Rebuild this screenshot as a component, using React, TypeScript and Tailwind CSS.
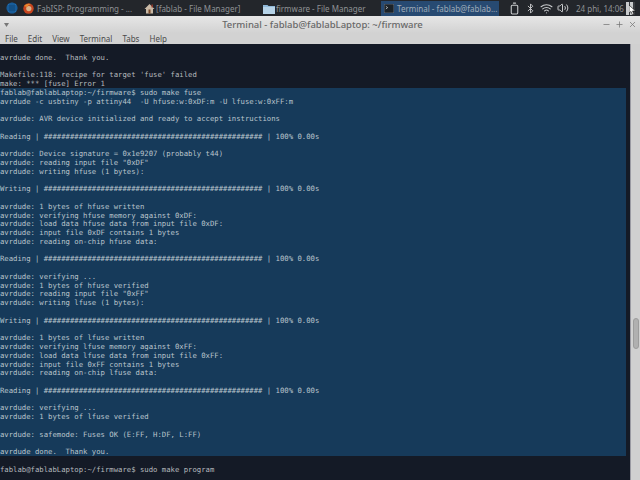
import { Battery, Bluetooth, Minus, Plus, Volume2, Wifi, X } from 'lucide-react';

const aboveSelection = [
  '',
  'avrdude done.  Thank you.',
  '',
  "Makefile:118: recipe for target 'fuse' failed",
  'make: *** [fuse] Error 1',
];

const bar = '#'.repeat(50);

const selection = [
  'fablab@fablabLaptop:~/firmware$ sudo make fuse',
  'avrdude -c usbtiny -p attiny44  -U hfuse:w:0xDF:m -U lfuse:w:0xFF:m',
  '',
  'avrdude: AVR device initialized and ready to accept instructions',
  '',
  `Reading | ${bar} | 100% 0.00s`,
  '',
  'avrdude: Device signature = 0x1e9207 (probably t44)',
  'avrdude: reading input file "0xDF"',
  'avrdude: writing hfuse (1 bytes):',
  '',
  `Writing | ${bar} | 100% 0.00s`,
  '',
  'avrdude: 1 bytes of hfuse written',
  'avrdude: verifying hfuse memory against 0xDF:',
  'avrdude: load data hfuse data from input file 0xDF:',
  'avrdude: input file 0xDF contains 1 bytes',
  'avrdude: reading on-chip hfuse data:',
  '',
  `Reading | ${bar} | 100% 0.00s`,
  '',
  'avrdude: verifying ...',
  'avrdude: 1 bytes of hfuse verified',
  'avrdude: reading input file "0xFF"',
  'avrdude: writing lfuse (1 bytes):',
  '',
  `Writing | ${bar} | 100% 0.00s`,
  '',
  'avrdude: 1 bytes of lfuse written',
  'avrdude: verifying lfuse memory against 0xFF:',
  'avrdude: load data lfuse data from input file 0xFF:',
  'avrdude: input file 0xFF contains 1 bytes',
  'avrdude: reading on-chip lfuse data:',
  '',
  `Reading | ${bar} | 100% 0.00s`,
  '',
  'avrdude: verifying ...',
  'avrdude: 1 bytes of lfuse verified',
  '',
  'avrdude: safemode: Fuses OK (E:FF, H:DF, L:FF)',
  '',
  'avrdude done.  Thank you.',
];

function Lines({ lines }: { lines: string[] }) {
  return (
    <>
      {lines.map((line, i) => (
        <div key={i} className="h-[8.77px] whitespace-pre">
          {line}
        </div>
      ))}
    </>
  );
}

function StartIcon() {
  return (
    <svg width="12" height="12" viewBox="0 0 12 12">
      <circle cx="6" cy="6" r="5.5" fill="#1f6fb5" />
      <path d="M1 4h10M0.5 6h11M1 8h10M4 1v10M6 0.5v11M8 1v10" stroke="#0d3a66" strokeWidth="0.7" />
    </svg>
  );
}

function FirefoxIcon() {
  return (
    <svg width="11" height="11" viewBox="0 0 11 11" className="shrink-0">
      <circle cx="5.5" cy="5.5" r="5.2" fill="#c8451f" />
      <circle cx="5.8" cy="5.6" r="2.6" fill="#d9b48a" />
      <path d="M1 3 Q4 0 8 1 Q5 2 4 4Z" fill="#e88a2c" />
    </svg>
  );
}

function HomeIcon() {
  return (
    <svg width="11" height="11" viewBox="0 0 11 11" className="shrink-0">
      <path d="M5.5 1 L10.5 6 H9 V10.5 H2 V6 H0.5Z" fill="#c9b9a6" />
      <rect x="4.5" y="6.5" width="2" height="4" fill="#7a4a2a" />
      <rect x="7.5" y="1.5" width="1.3" height="3" fill="#a33c2a" />
    </svg>
  );
}

function FolderIcon() {
  return (
    <svg width="12" height="10" viewBox="0 0 12 10" className="shrink-0">
      <path d="M0 1h4.5l1 1H12v8H0z" fill="#8fb8d8" />
      <rect y="3" width="12" height="7" fill="#b6d3e8" />
    </svg>
  );
}

function TerminalIcon() {
  return (
    <svg width="10" height="9" viewBox="0 0 11 10" className="shrink-0">
      <rect width="11" height="10" fill="#1b2228" stroke="#8b9298" strokeWidth="0.6" />
      <path d="M2 2.5 L4 4 L2 5.5" stroke="#d8dde0" strokeWidth="0.8" fill="none" />
    </svg>
  );
}

export default function App() {
  return (
    <div className="flex h-[480px] w-[640px] flex-col overflow-hidden font-['Noto_Sans',sans-serif]">
      {/* panel */}
      <div className="flex h-[16px] shrink-0 items-center bg-[#23262b] text-[8px] text-[#8f9295]">
        <div className="flex w-[23px] shrink-0 justify-center pl-[1px]">
          <StartIcon />
        </div>
        <div className="flex w-[120px] shrink-0 items-center gap-[3px] pt-[1px]">
          <FirefoxIcon />
          <span className="whitespace-nowrap">FabISP: Programming - ...</span>
        </div>
        <div className="flex w-[120px] shrink-0 items-center gap-[1px] pl-[1px] pt-[1px]">
          <HomeIcon />
          <span className="whitespace-nowrap">[fablab - File Manager]</span>
        </div>
        <div className="flex w-[118px] shrink-0 items-center pt-[1px]">
          <FolderIcon />
          <span className="ml-[1px] whitespace-nowrap">firmware - File Manager</span>
        </div>
        <div className="flex h-[15px] w-[118px] shrink-0 items-center gap-[3px] bg-[#274a72] pl-[3px] pt-[1px] text-[#a0acb8]">
          <TerminalIcon />
          <span className="whitespace-nowrap">Terminal - fablab@fablab...</span>
        </div>
        <div className="ml-[9px] flex w-[68px] shrink-0 items-center text-[#c9cbcd]">
          <Battery size={13} strokeWidth={2} className="shrink-0 -rotate-90" />
          <Bluetooth size={11} strokeWidth={2} className="ml-[4px] shrink-0" />
          <Wifi size={13} strokeWidth={2} className="ml-[4px] shrink-0" />
          <Volume2 size={12} strokeWidth={2} className="ml-[4px] shrink-0" />
        </div>
        <span className="w-[50px] shrink-0 whitespace-nowrap pt-[1px]">24 phi, 14:06</span>
        <div className="relative flex h-[13px] w-[9px] shrink-0 gap-[1px] bg-[#3a3d42]">
          <div className="w-[3px] bg-[#c8cacc]" />
          <div className="w-[3px] bg-[#c8cacc]" />
          <svg width="7" height="10" viewBox="0 0 7 10" className="absolute left-[3px] top-[3px]">
            <path d="M0 0 L0 8 L2 6.5 L3.5 10 L5 9.3 L3.5 6 L6.5 6Z" fill="#fff" stroke="#000" strokeWidth="0.6" />
          </svg>
        </div>
      </div>

      {/* window title */}
      <div className="flex h-[17px] shrink-0 items-center bg-gradient-to-b from-[#e6e6e6] to-[#d2d2d2] text-[9.5px] font-medium text-[#686868]">
        <svg width="5" height="4" viewBox="0 0 5 4" className="ml-[4px]">
          <path d="M0 0h5L2.5 4z" fill="#777" />
        </svg>
        <span className="flex-1 pl-[34px] pt-[1px] text-center">Terminal - fablab@fablabLaptop: ~/firmware</span>
        <div className="mr-[3px] flex items-center gap-[4px] text-[#777]">
          <Minus size={9} strokeWidth={2} />
          <Plus size={9} strokeWidth={2} />
          <X size={9} strokeWidth={2} />
        </div>
      </div>

      {/* menu */}
      <div className="flex h-[11px] shrink-0 items-center gap-[10px] bg-[#d2d2d2] pl-[5px] text-[8px] text-[#4a4a4a]">
        <span>File</span>
        <span>Edit</span>
        <span>View</span>
        <span>Terminal</span>
        <span>Tabs</span>
        <span>Help</span>
      </div>

      {/* terminal */}
      <div className="flex min-h-0 flex-1">
        <div className="flex-1 overflow-hidden bg-[#141a26] pr-[4px] font-['DejaVu_Sans_Mono',monospace] text-[7.27px] text-[#b4b9bd]">
          <Lines lines={aboveSelection} />
          <div className="bg-[#163a5a] text-[#b9c4cc]">
            <Lines lines={selection} />
          </div>
          <Lines lines={['', 'fablab@fablabLaptop:~/firmware$ sudo make program']} />
        </div>
        <div className="w-[10px] shrink-0 border-l border-[#9a9aa2] bg-[#d0d0d0] pl-[2px] pt-[274px]">
          <div className="h-[31px] w-[6px] rounded-[3px] border border-[#9c9c9c] bg-[#b0b0b0]" />
        </div>
      </div>
    </div>
  );
}
